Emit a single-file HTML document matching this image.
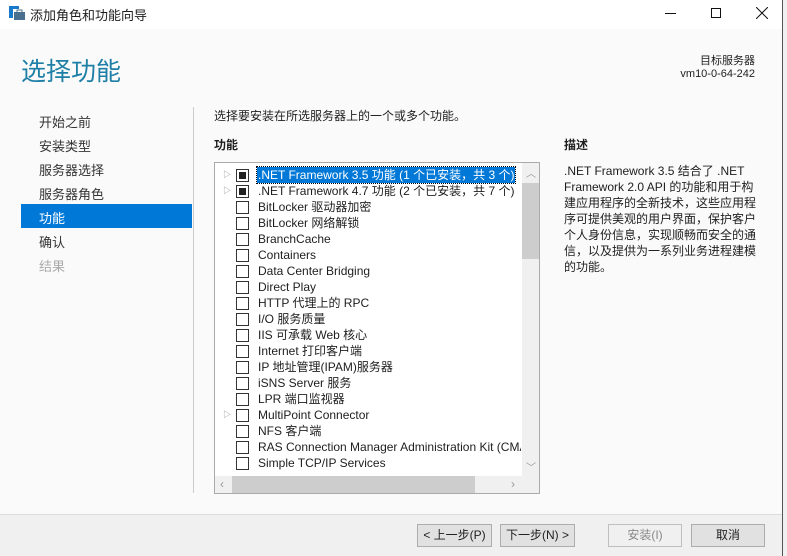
<!DOCTYPE html><html><head><meta charset="utf-8"><style>
*{margin:0;padding:0;box-sizing:border-box}
body{width:787px;height:556px;overflow:hidden;background:#fff;font-family:"Liberation Sans","Noto Sans CJK SC",sans-serif;font-size:12px;color:#1e1e1e;position:relative}
.a{position:absolute;white-space:nowrap}
.row{position:absolute;left:236px;height:16px;line-height:16px;font-size:12px;white-space:nowrap;width:300px}
.cb{position:absolute;left:0;top:2px;width:13px;height:13px;border:1px solid #333;background:#fff}
.cb.f::after{content:"";position:absolute;left:2px;top:2px;width:7px;height:7px;background:#222}
.lb{position:absolute;left:21px;top:0;padding:0 1px;white-space:nowrap}
.tri{position:absolute;left:-13px;top:0;color:#888;font-size:8px}
.nav{position:absolute;left:39px;font-size:13px;color:#333}
.btn{position:absolute;top:524px;height:23px;border:1px solid #adadad;background:#e1e1e1;text-align:center;line-height:21px;font-size:12px}
</style></head><body>
<div class="a" style="left:0;top:0;width:787px;height:29px;background:#fff"></div>
<svg class="a" style="left:9px;top:6px" width="16" height="15"><rect x="0" y="0" width="4" height="12" fill="#1979ca"/><rect x="0" y="0" width="10" height="3" fill="#1979ca"/><rect x="5" y="6" width="11" height="8" fill="#4a6f8f"/><rect x="8" y="4" width="5" height="3" fill="none" stroke="#4a6f8f"/></svg>
<div class="a" style="left:30px;top:5px;font-size:13px">添加角色和功能向导</div>
<div class="a" style="left:665px;top:13px;width:11px;height:1px;background:#111"></div>
<div class="a" style="left:711px;top:8px;width:10px;height:10px;border:1px solid #111"></div>
<svg class="a" style="left:756px;top:7px" width="12" height="12"><path d="M0 0L12 12M12 0L0 12" stroke="#111"/></svg>
<div class="a" style="left:0;top:29px;width:782px;height:485px;background:#fafafa"></div>
<div class="a" style="left:782px;top:0;width:5px;height:556px;background:#f0f0f0;border-left:1px solid #555"></div>
<div class="a" style="left:21px;top:52px;font-size:25px;color:#1e7fa6">选择功能</div>
<div class="a" style="right:32px;top:52px;font-size:11px;text-align:right">目标服务器<br>vm10-0-64-242</div>
<div class="nav" style="top:112px">开始之前</div>
<div class="nav" style="top:136px">安装类型</div>
<div class="nav" style="top:160px">服务器选择</div>
<div class="nav" style="top:184px">服务器角色</div>
<div class="a" style="left:21px;top:204px;width:171px;height:24px;background:#0078d7"></div>
<div class="nav" style="top:208px;color:#fff">功能</div>
<div class="nav" style="top:232px">确认</div>
<div class="nav" style="top:256px;color:#aaa">结果</div>
<div class="a" style="left:193px;top:107px;width:1px;height:386px;background:#ccc"></div>
<div class="a" style="left:214px;top:107px">选择要安装在所选服务器上的一个或多个功能。</div>
<div class="a" style="left:214px;top:136px;font-weight:bold">功能</div>
<div class="a" style="left:564px;top:136px;font-weight:bold">描述</div>
<div class="a" style="left:564px;top:163px;line-height:16px;font-size:12px">.NET Framework 3.5 结合了 .NET<br>Framework 2.0 API 的功能和用于构<br>建应用程序的全新技术，这些应用程<br>序可提供美观的用户界面，保护客户<br>个人身份信息，实现顺畅而安全的通<br>信，以及提供为一系列业务进程建模<br>的功能。</div>
<div class="a" style="left:214px;top:162px;width:326px;height:332px;border:1px solid #aaa;background:#fff;overflow:hidden">
<div class="a" style="left:307px;top:0;width:17px;height:313px;background:#f0f0f0"></div>
<div class="a" style="left:307px;top:20px;width:17px;height:76px;background:#cdcdcd"></div>
<div class="a" style="left:311px;top:2px;color:#999;font-size:10px">︿</div>
<div class="a" style="left:311px;top:296px;color:#999;font-size:10px">﹀</div>
<div class="a" style="left:0;top:313px;width:324px;height:17px;background:#f0f0f0"></div>
<div class="a" style="left:17px;top:313px;width:243px;height:17px;background:#cdcdcd"></div>
<div class="a" style="left:5px;top:314px;color:#999">‹</div><div class="a" style="left:296px;top:314px;color:#999">›</div>
</div>
<div class="row" style="top:167px"><span class="tri">▷</span><span class="cb f"></span><span class="lb" style="background:#0078d7;color:#fff;outline:1px dotted #000">.NET Framework 3.5 功能 (1 个已安装，共 3 个)</span></div>
<div class="row" style="top:183px"><span class="tri">▷</span><span class="cb f"></span><span class="lb">.NET Framework 4.7 功能 (2 个已安装，共 7 个)</span></div>
<div class="row" style="top:199px"><span class="cb"></span><span class="lb">BitLocker 驱动器加密</span></div>
<div class="row" style="top:215px"><span class="cb"></span><span class="lb">BitLocker 网络解锁</span></div>
<div class="row" style="top:231px"><span class="cb"></span><span class="lb">BranchCache</span></div>
<div class="row" style="top:247px"><span class="cb"></span><span class="lb">Containers</span></div>
<div class="row" style="top:263px"><span class="cb"></span><span class="lb">Data Center Bridging</span></div>
<div class="row" style="top:279px"><span class="cb"></span><span class="lb">Direct Play</span></div>
<div class="row" style="top:295px"><span class="cb"></span><span class="lb">HTTP 代理上的 RPC</span></div>
<div class="row" style="top:311px"><span class="cb"></span><span class="lb">I/O 服务质量</span></div>
<div class="row" style="top:327px"><span class="cb"></span><span class="lb">IIS 可承载 Web 核心</span></div>
<div class="row" style="top:343px"><span class="cb"></span><span class="lb">Internet 打印客户端</span></div>
<div class="row" style="top:359px"><span class="cb"></span><span class="lb">IP 地址管理(IPAM)服务器</span></div>
<div class="row" style="top:375px"><span class="cb"></span><span class="lb">iSNS Server 服务</span></div>
<div class="row" style="top:391px"><span class="cb"></span><span class="lb">LPR 端口监视器</span></div>
<div class="row" style="top:407px"><span class="tri">▷</span><span class="cb"></span><span class="lb">MultiPoint Connector</span></div>
<div class="row" style="top:423px"><span class="cb"></span><span class="lb">NFS 客户端</span></div>
<div class="row" style="top:439px;width:285px;overflow:hidden"><span class="cb"></span><span class="lb">RAS Connection Manager Administration Kit (CMAK)</span></div>
<div class="row" style="top:455px"><span class="cb"></span><span class="lb">Simple TCP/IP Services</span></div>
<div class="a" style="left:0;top:514px;width:782px;height:42px;background:#f0f0f0;border-top:1px solid #dcdcdc"></div>
<div class="btn" style="left:417px;width:75px">&lt; 上一步(P)</div>
<div class="btn" style="left:500px;width:75px">下一步(N) &gt;</div>
<div class="btn" style="left:608px;width:74px;border-color:#bfbfbf;color:#888;background:#f0f0f0">安装(I)</div>
<div class="btn" style="left:691px;width:74px">取消</div>
</body></html>
